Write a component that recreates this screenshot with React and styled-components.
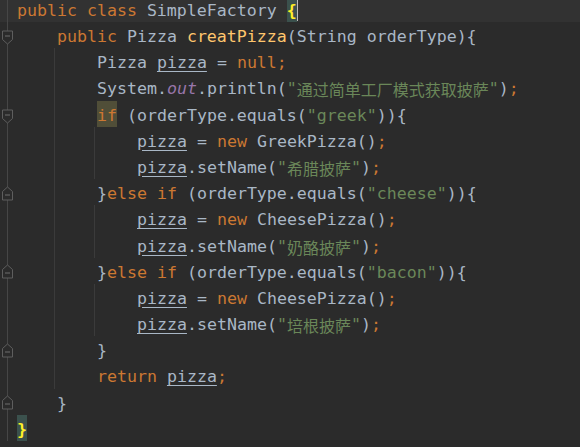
import React from "react";
import styled, { createGlobalStyle } from "styled-components";

const GlobalStyle = createGlobalStyle`
  html, body {
    margin: 0;
    padding: 0;
    background: #2b2b2b;
  }
`;

const colors = {
  kw: "#cc7832",
  txt: "#a9b7c6",
  fn: "#ffc66d",
  str: "#6a8759",
  field: "#9876aa",
  semi: "#cc7832",
};

const Editor = styled.div`
  width: 580px;
  height: 447px;
  overflow: hidden;
  background: #2b2b2b;
  font-family: "DejaVu Sans Mono", "Noto Sans CJK SC", monospace;
  font-size: 16.6px;
  color: #a9b7c6;
  display: flex;
  flex-direction: column;
`;

const Lines = styled.div`
  margin-top: -4.2px;
  display: flex;
  flex-direction: column;
`;

const Row = styled.div`
  display: flex;
  height: 26.2px;
  flex: none;
  background: ${({ $current }) => ($current ? "#323232" : "transparent")};
`;

const Gutter = styled.div`
  width: 16px;
  flex: none;
  display: flex;
  align-items: center;
  background: linear-gradient(
    to right,
    transparent 7px,
    #464646 7px,
    #464646 8px,
    transparent 8px
  );
`;

const Code = styled.div`
  padding-left: 1px;
  white-space: pre;
  line-height: 26.2px;
  display: flex;
  align-items: stretch;
`;

const Indent = styled.span`
  display: inline-block;
  width: 40px;
  height: 26.2px;
  background: ${({ $guide }) =>
    $guide
      ? "linear-gradient(to right, transparent 37px, #3b3b3b 37px, #3b3b3b 38px, transparent 38px)"
      : "none"};
`;

const Token = styled.span`
  padding-top: 2px;
  color: ${({ $kind }) => colors[$kind] || colors.txt};
  font-style: ${({ $kind }) => ($kind === "field" ? "italic" : "normal")};
  text-decoration: ${({ $u }) => ($u ? "underline" : "none")};
  text-underline-offset: 3px;
`;

const Cjk = styled.span`
  font-family: "Noto Sans CJK SC", sans-serif;
  font-size: 16px;
`;

const Mark = styled.span`
  display: inline-block;
  box-sizing: border-box;
  height: 26.2px;
  padding-top: 2px;
  background: ${({ $tone }) => ($tone === "brace" ? "#3b514d" : "#504e38")};
  color: ${({ $tone }) => ($tone === "brace" ? "#ffef28" : colors.kw)};
  font-weight: ${({ $tone }) => ($tone === "brace" ? "bold" : "normal")};
`;

const Caret = styled.span`
  display: inline-block;
  width: 1px;
  height: 22px;
  margin-top: 3px;
  background: #bbbbbb;
`;

const Fold = ({ up }) => (
  <svg width="13" height="15" viewBox="0 0 13 15" style={{ marginLeft: 1, marginTop: up ? 2 : 5 }}>
    <path
      d={up ? "M1.5 14 H11.5 V5.5 L6.5 1 L1.5 5.5 Z" : "M1.5 1 H11.5 V9.5 L6.5 14 L1.5 9.5 Z"}
      fill="#2b2b2b"
      stroke="#5e5e5e"
      strokeWidth="1"
    />
    <path d={up ? "M4 9 H9" : "M4 6 H9"} stroke="#6e6e6e" strokeWidth="1" />
  </svg>
);

const P = "pizza";

const lines = [
  { indent: 0, current: true, tokens: [["kw", "public class "], ["txt", "SimpleFactory "], ["brace", "{"], ["caret"]] },
  { indent: 1, fold: "down", tokens: [["kw", "public "], ["txt", "Pizza "], ["fn", "creatPizza"], ["txt", "(String orderType){"]] },
  { indent: 2, tokens: [["txt", "Pizza "], ["var", P], ["txt", " = "], ["kw", "null"], ["semi", ";"]] },
  { indent: 2, tokens: [["txt", "System."], ["field", "out"], ["txt", ".println("], ["str", "\""], ["cjk", "通过简单工厂模式获取披萨"], ["str", "\""], ["txt", ")"], ["semi", ";"]] },
  { indent: 2, fold: "down", tokens: [["if", "if"], ["txt", " (orderType.equals("], ["str", "\"greek\""], ["txt", ")){"]] },
  { indent: 3, tokens: [["var", P], ["txt", " = "], ["kw", "new "], ["txt", "GreekPizza()"], ["semi", ";"]] },
  { indent: 3, tokens: [["var", P], ["txt", ".setName("], ["str", "\""], ["cjk", "希腊披萨"], ["str", "\""], ["txt", ")"], ["semi", ";"]] },
  { indent: 2, fold: "up", tokens: [["txt", "}"], ["kw", "else if "], ["txt", "(orderType.equals("], ["str", "\"cheese\""], ["txt", ")){"]] },
  { indent: 3, tokens: [["var", P], ["txt", " = "], ["kw", "new "], ["txt", "CheesePizza()"], ["semi", ";"]] },
  { indent: 3, tokens: [["var", P], ["txt", ".setName("], ["str", "\""], ["cjk", "奶酪披萨"], ["str", "\""], ["txt", ")"], ["semi", ";"]] },
  { indent: 2, fold: "up", tokens: [["txt", "}"], ["kw", "else if "], ["txt", "(orderType.equals("], ["str", "\"bacon\""], ["txt", ")){"]] },
  { indent: 3, tokens: [["var", P], ["txt", " = "], ["kw", "new "], ["txt", "CheesePizza()"], ["semi", ";"]] },
  { indent: 3, tokens: [["var", P], ["txt", ".setName("], ["str", "\""], ["cjk", "培根披萨"], ["str", "\""], ["txt", ")"], ["semi", ";"]] },
  { indent: 2, fold: "up", tokens: [["txt", "}"]] },
  { indent: 2, tokens: [["kw", "return "], ["var", P], ["semi", ";"]] },
  { indent: 1, fold: "up", tokens: [["txt", "}"]] },
  { indent: 0, tokens: [["brace", "}"]] },
];

// which indent levels carry a guide line on a given row
const guides = (i, level) => {
  if (level === 0) return i >= 2 && i <= 14;
  if (level === 1) return [5, 6, 8, 9, 11, 12].includes(i);
  return false;
};

const renderToken = ([kind, text], k) => {
  if (kind === "caret") return <Caret key={k} />;
  if (kind === "brace") return <Mark key={k} $tone="brace">{text}</Mark>;
  if (kind === "if") return <Mark key={k} $tone="if">{text}</Mark>;
  if (kind === "cjk")
    return (
      <Token key={k} $kind="str">
        <Cjk>{text}</Cjk>
      </Token>
    );
  if (kind === "var") return <Token key={k} $kind="txt" $u>{text}</Token>;
  return <Token key={k} $kind={kind}>{text}</Token>;
};

export default function App() {
  return (
    <>
      <GlobalStyle />
      <Editor>
        <Lines>
          {lines.map((line, i) => (
            <Row key={i} $current={line.current}>
              <Gutter>{line.fold && <Fold up={line.fold === "up"} />}</Gutter>
              <Code>
                {Array.from({ length: line.indent }).map((_, l) => (
                  <Indent key={l} $guide={guides(i, l)} />
                ))}
                {line.tokens.map(renderToken)}
              </Code>
            </Row>
          ))}
        </Lines>
      </Editor>
    </>
  );
}
